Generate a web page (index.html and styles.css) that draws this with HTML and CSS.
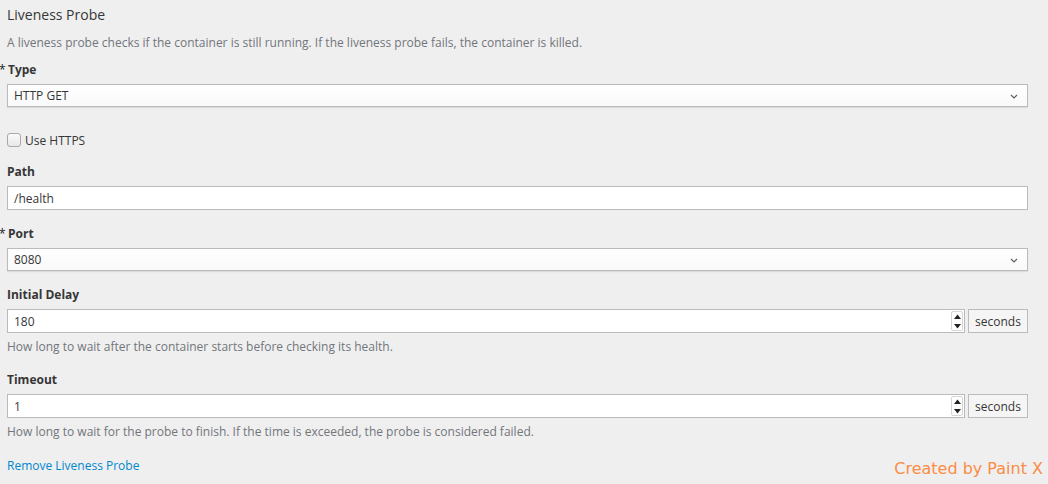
FILE: index.html
```html
<!DOCTYPE html>
<html>
<head>
<meta charset="utf-8">
<link rel="stylesheet" href="styles.css">
</head>
<body>
<div class="page">
  <h3 class="title">Liveness Probe</h3>
  <p class="desc">A liveness probe checks if the container is still running. If the liveness probe fails, the container is killed.</p>

  <div class="group">
    <label class="label required">Type</label>
    <div class="select"><span>HTTP GET</span>
      <svg class="caret" width="8" height="5" viewBox="0 0 8 5"><path d="M1 1 L4 4 L7 1" fill="none" stroke="#5b6066" stroke-width="1.2"/></svg>
    </div>
  </div>

  <div class="check">
    <span class="box"></span><span class="check-text">Use HTTPS</span>
  </div>

  <div class="group">
    <label class="label">Path</label>
    <div class="input">/health</div>
  </div>

  <div class="group">
    <label class="label required">Port</label>
    <div class="select"><span>8080</span>
      <svg class="caret" width="8" height="5" viewBox="0 0 8 5"><path d="M1 1 L4 4 L7 1" fill="none" stroke="#5b6066" stroke-width="1.2"/></svg>
    </div>
  </div>

  <div class="group group-wide">
    <label class="label">Initial Delay</label>
    <div class="input-group">
      <div class="input number"><span class="val">180</span>
        <span class="spin"><svg width="9" height="20" viewBox="0 0 9 20"><path d="M1 8 L4.5 3.5 L8 8 Z" fill="#222"/><path d="M1 13 L4.5 17.5 L8 13 Z" fill="#222"/></svg></span>
      </div>
      <div class="addon">seconds</div>
    </div>
    <p class="help">How long to wait after the container starts before checking its health.</p>
  </div>

  <div class="group">
    <label class="label">Timeout</label>
    <div class="input-group">
      <div class="input number"><span class="val">1</span>
        <span class="spin"><svg width="9" height="20" viewBox="0 0 9 20"><path d="M1 8 L4.5 3.5 L8 8 Z" fill="#222"/><path d="M1 13 L4.5 17.5 L8 13 Z" fill="#222"/></svg></span>
      </div>
      <div class="addon">seconds</div>
    </div>
    <p class="help">How long to wait for the probe to finish. If the time is exceeded, the probe is considered failed.</p>
  </div>

  <a class="link" href="#">Remove Liveness Probe</a>

  <div class="watermark">Created by Paint X</div>
</div>
</body>
</html>
```

FILE: styles.css
```css
html, body {
  margin: 0;
  padding: 0;
  background: #efefef;
}
body {
  font-family: "Open Sans", "Liberation Sans", sans-serif;
  font-size: 12px;
  color: #363636;
  width: 1048px;
  height: 484px;
  overflow: hidden;
}
.page {
  position: relative;
  height: 484px;
  padding: 5px 20px 0 7px;
  box-sizing: border-box;
}
.title {
  margin: 0;
  font-size: 14px;
  font-weight: 400;
  line-height: 20px;
  color: #363636;
}
.desc {
  margin: 9px 0 10px;
  line-height: 17px;
  color: #72767b;
}
.group {
  margin-bottom: 15px;
}
.group-wide {
  margin-bottom: 16px;
}
.label {
  display: block;
  font-weight: 700;
  line-height: 18px;
  margin-bottom: 5px;
  color: #363636;
}
.required::before {
  content: "*";
  display: inline-block;
  width: 9px;
  margin-left: -8px;
  font-weight: 400;
  color: #222;
}
.select {
  height: 23px;
  box-sizing: border-box;
  border: 1px solid #bbbbbb;
  background: linear-gradient(#ffffff, #f9f9f9);
  box-shadow: 0 1px 1px rgba(0,0,0,0.08);
  display: flex;
  align-items: center;
  justify-content: space-between;
  padding: 0 9px 0 6px;
  color: #363636;
}
.caret {
  display: block;
  margin-top: 1px;
}
.input {
  height: 24px;
  box-sizing: border-box;
  border: 1px solid #bbbbbb;
  background: #ffffff;
  display: flex;
  align-items: center;
  padding: 0 6px;
  color: #363636;
}
.input-group {
  display: flex;
  gap: 3px;
}
.input.number {
  flex: 1;
  justify-content: space-between;
  padding-right: 1px;
}
.spin {
  width: 12px;
  height: 20px;
  box-sizing: border-box;
  border: 1px solid #d6d6d6;
  border-radius: 2px;
  background: #fff;
  display: flex;
  align-items: center;
  justify-content: center;
}
.spin svg {
  display: block;
}
.addon {
  width: 60px;
  height: 24px;
  box-sizing: border-box;
  border: 1px solid #bbbbbb;
  background: #f5f5f5;
  display: flex;
  align-items: center;
  justify-content: center;
  color: #363636;
}
.help {
  margin: 5px 0 0;
  line-height: 17px;
  color: #72767b;
}
.check {
  display: flex;
  align-items: center;
  margin: 26px 0 16px;
  height: 14px;
}
.box {
  width: 14px;
  height: 14px;
  box-sizing: border-box;
  border: 1px solid #a8a8a8;
  border-radius: 3px;
  background: linear-gradient(#fafafa, #e8e8e8);
}
.check-text {
  margin-left: 4px;
  color: #363636;
}
.link {
  display: block;
  padding-top: 2px;
  line-height: 18px;
  color: #0088ce;
  text-decoration: none;
}
.watermark {
  position: absolute;
  right: 5px;
  top: 459px;
  font-family: "DejaVu Sans", sans-serif;
  font-size: 16px;
  line-height: 20px;
  color: #fb8c45;
}
```
